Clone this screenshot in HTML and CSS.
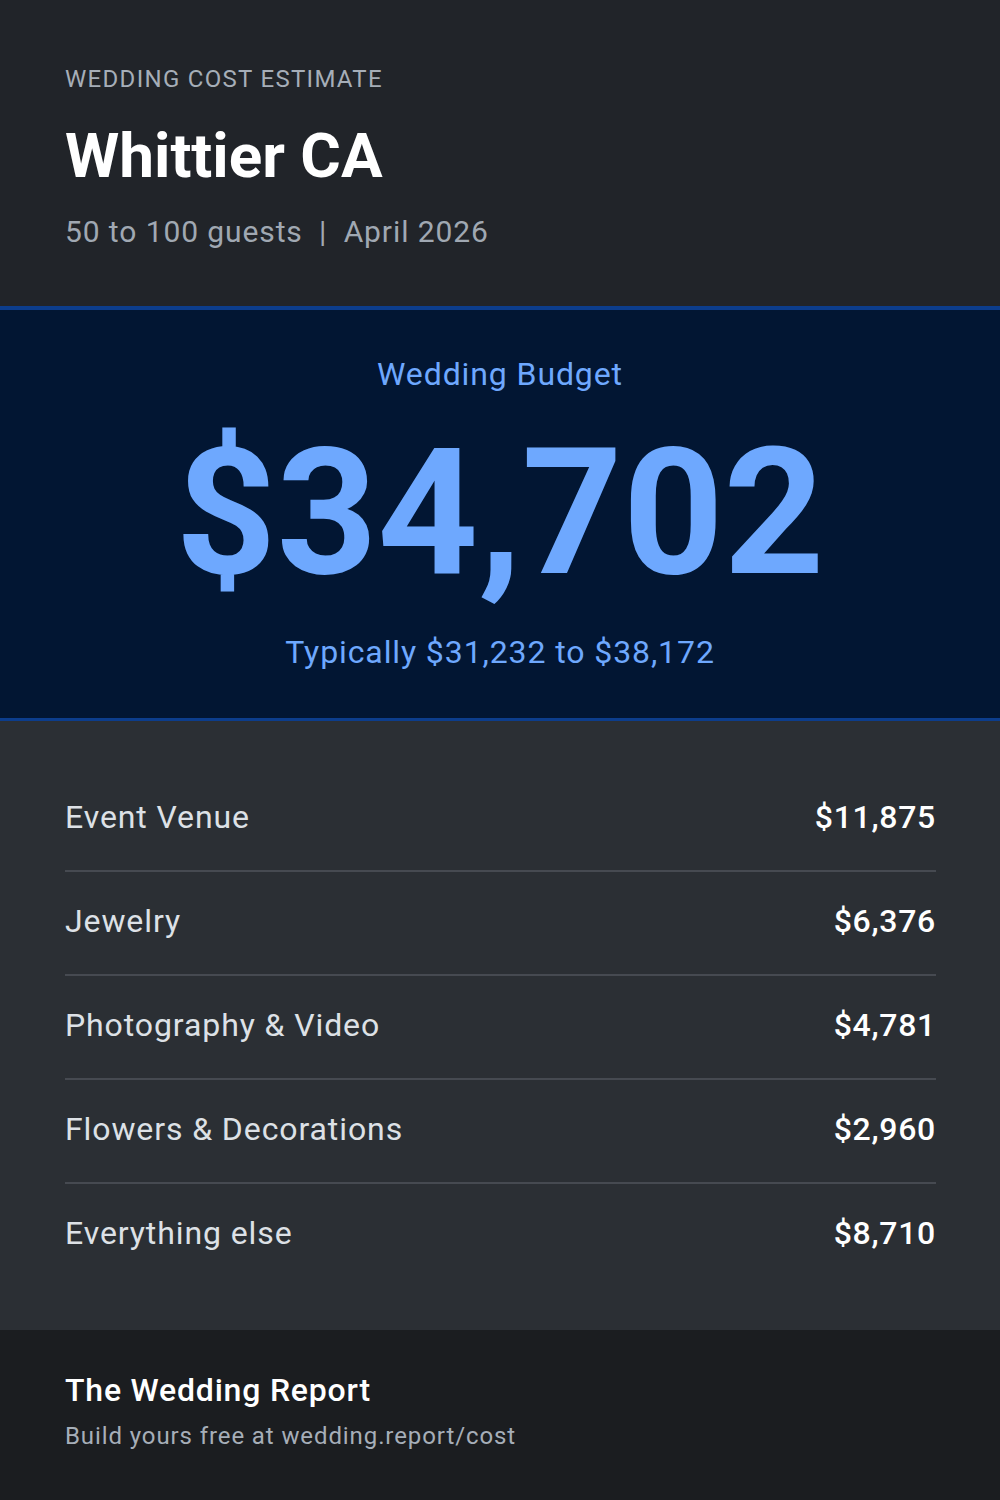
FILE: index.html
```html
<!DOCTYPE html>
<html lang="en">
<head>
    <meta charset="UTF-8">
    <meta name="viewport" content="width=device-width, initial-scale=1.0">
    <title>Wedding Cost Estimate - Whittier CA</title>
    <link rel="stylesheet" href="styles.css">
</head>
<body>
    <div class="card">
        <header class="top">
            <p class="eyebrow">WEDDING COST ESTIMATE</p>
            <h1 class="city">Whittier CA</h1>
            <p class="meta">50 to 100 guests <span class="sep">|</span> April 2026</p>
        </header>

        <section class="budget">
            <p class="budget-label">Wedding Budget</p>
            <p class="budget-total">$34,702</p>
            <p class="budget-range">Typically $31,232 to $38,172</p>
        </section>

        <section class="breakdown">
            <div class="line-item">
                <span class="item-name">Event Venue</span>
                <span class="item-cost">$11,875</span>
            </div>
            <div class="line-item">
                <span class="item-name">Jewelry</span>
                <span class="item-cost">$6,376</span>
            </div>
            <div class="line-item">
                <span class="item-name">Photography &amp; Video</span>
                <span class="item-cost">$4,781</span>
            </div>
            <div class="line-item">
                <span class="item-name">Flowers &amp; Decorations</span>
                <span class="item-cost">$2,960</span>
            </div>
            <div class="line-item">
                <span class="item-name">Everything else</span>
                <span class="item-cost">$8,710</span>
            </div>
        </section>

        <footer class="brand">
            <p class="brand-name">The Wedding Report</p>
            <p class="brand-link">Build yours free at wedding.report/cost</p>
        </footer>
    </div>
</body>
</html>
```

FILE: styles.css
```css
body {
    font-family: Roboto, 'Liberation Sans', sans-serif;
    margin: 0;
    padding: 0;
    background-color: #1b1d20;
    color: #dde1e6;
}

p, h1 {
    margin: 0;
}

.card {
    width: 1000px;
    height: 1500px;
    display: flex;
    flex-direction: column;
}

.top {
    background-color: #212429;
    padding: 65px 65px 56px;
}

.eyebrow {
    font-size: 24px;
    line-height: 29px;
    letter-spacing: 1.3px;
    color: #a6aeb8;
}

.city {
    margin-top: 25px;
    font-size: 62px;
    line-height: 74px;
    font-weight: 700;
    color: #ffffff;
}

.meta {
    margin-top: 21px;
    font-size: 30px;
    line-height: 36px;
    letter-spacing: 0.9px;
    color: #a0a8b2;
}

.sep {
    margin: 0 8px;
}

.budget {
    background-color: #021633;
    border-top: 4px solid #0c3d8c;
    border-bottom: 3px solid #0c3d8c;
    padding: 45px 65px 47px;
    text-align: center;
    color: #6ea8fe;
}

.budget-label {
    font-size: 32px;
    line-height: 38px;
    letter-spacing: 0.9px;
}

.budget-total {
    margin-top: 32px;
    font-size: 176px;
    line-height: 176px;
    font-weight: 700;
}

.budget-range {
    margin-top: 32px;
    font-size: 32px;
    line-height: 38px;
    letter-spacing: 0.9px;
}

.breakdown {
    background-color: #2b2f34;
    padding: 47px 64px 44px 65px;
}

.line-item {
    display: flex;
    justify-content: space-between;
    align-items: center;
    padding: 30px 0 34px;
    font-size: 32px;
    line-height: 38px;
    border-bottom: 2px solid #464a51;
}

.line-item:last-child {
    border-bottom: none;
}

.item-name {
    letter-spacing: 0.9px;
}

.item-cost {
    font-weight: 500;
    letter-spacing: 0.7px;
    color: #ffffff;
}

.brand {
    flex: 1;
    background-color: #1b1d20;
    padding: 41px 65px 0;
}

.brand-name {
    font-size: 32px;
    line-height: 38px;
    font-weight: 500;
    letter-spacing: 0.8px;
    color: #ffffff;
}

.brand-link {
    margin-top: 13px;
    font-size: 24px;
    line-height: 29px;
    letter-spacing: 0.9px;
    color: #a6aeb8;
}
```
